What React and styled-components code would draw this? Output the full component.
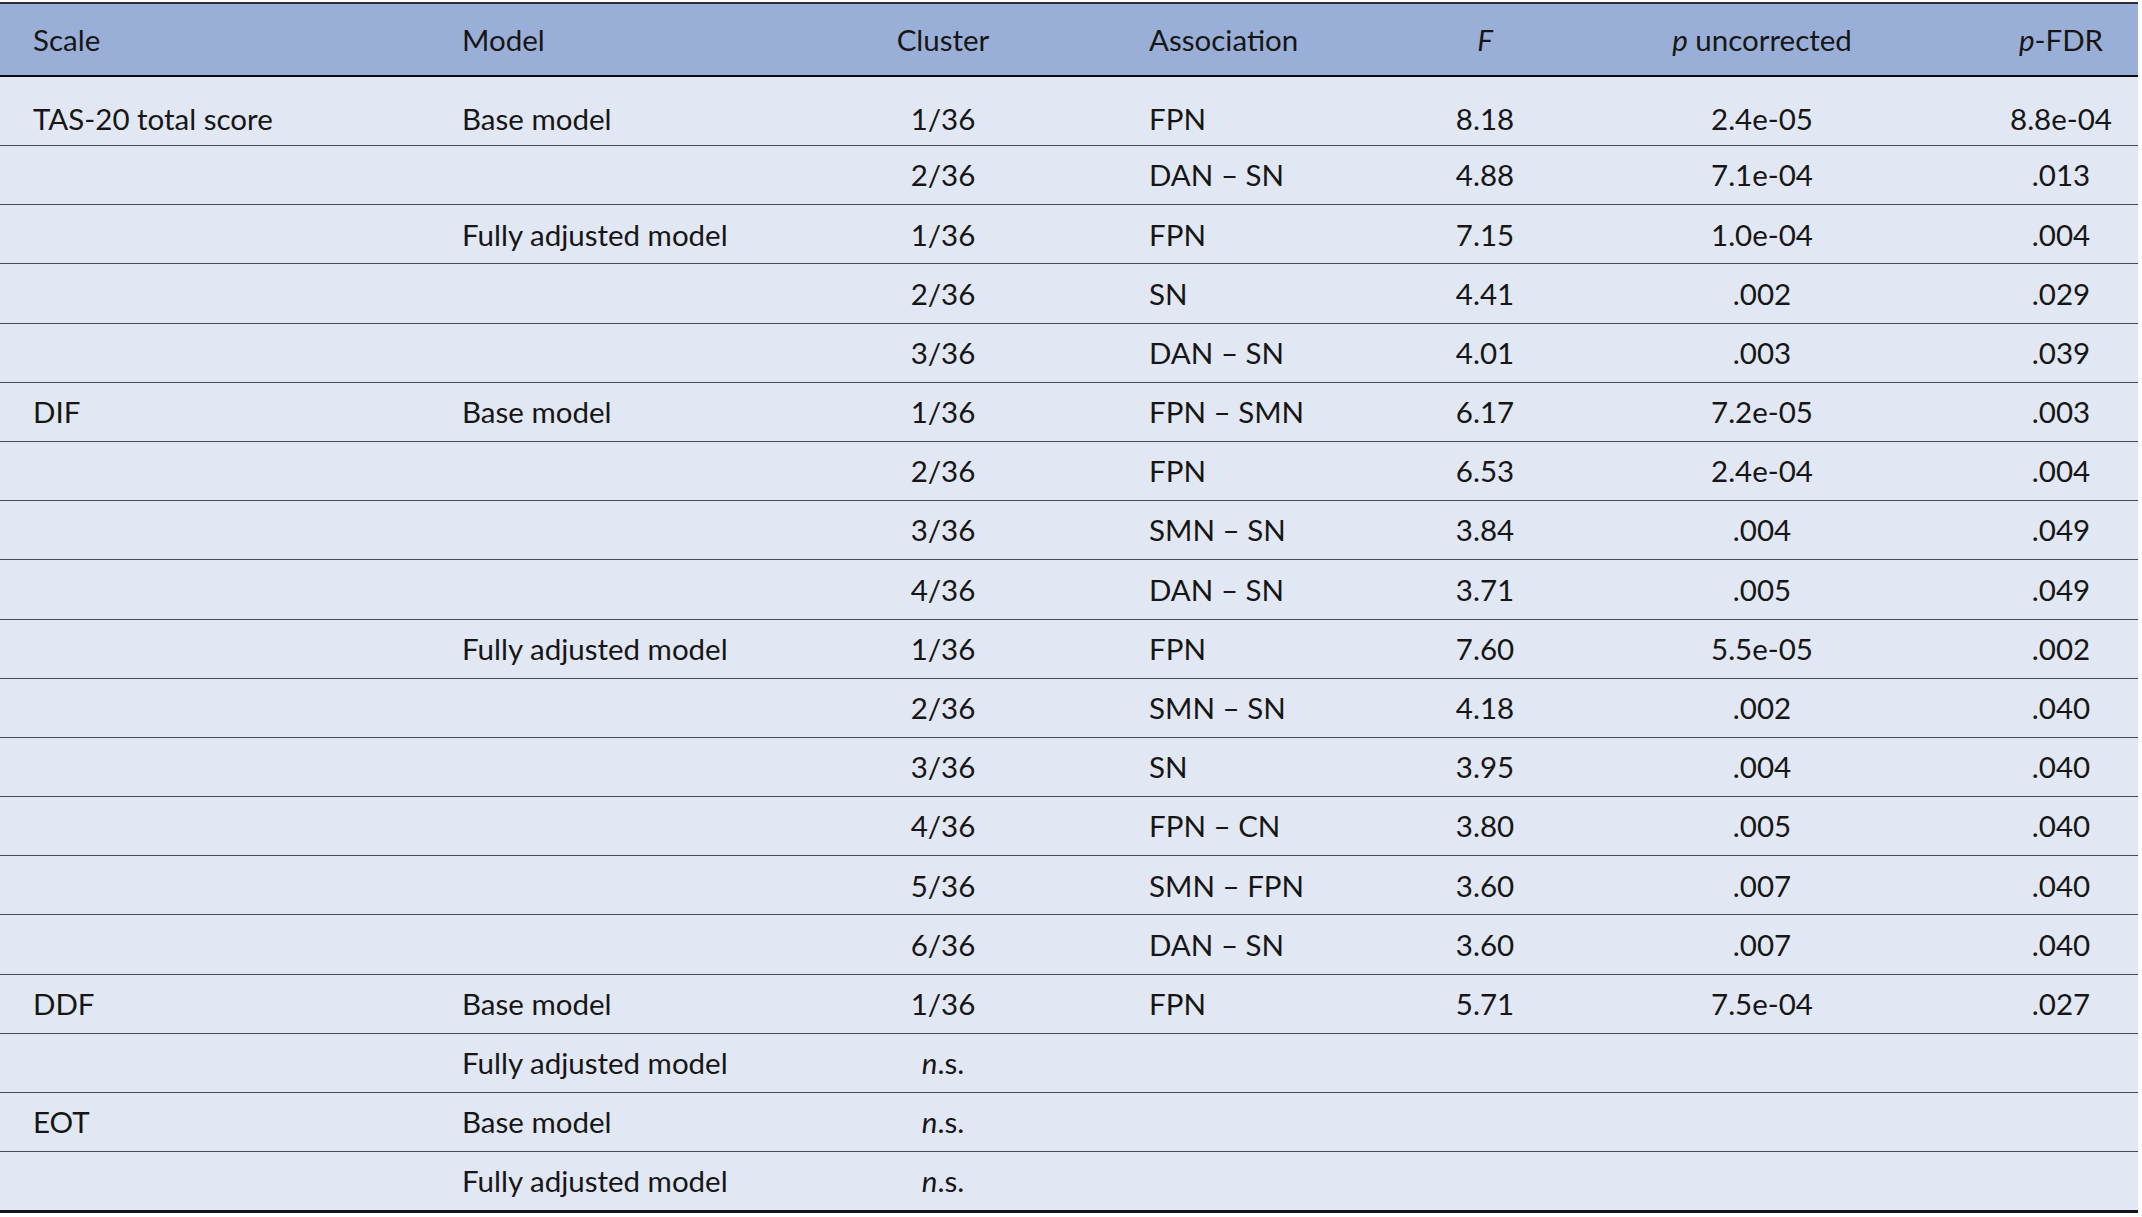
import React from 'react';
import styled, { createGlobalStyle } from 'styled-components';

const GlobalStyle = createGlobalStyle`
  html, body {
    margin: 0;
    padding: 0;
    background: #ffffff;
  }
  body {
    font-family: Lato, "Open Sans", "Noto Sans", sans-serif;
    color: #161616;
  }
`;

const COLS = '429px 407px 214px 330px 210px 344px 204px';

const Table = styled.div`
  width: 2138px;
  margin-top: 2px;
  border-top: 2px solid #2b2b30;
  background: #e1e7f3;
  font-size: 29.5px;
`;

const HeadRow = styled.div`
  display: grid;
  grid-template-columns: ${COLS};
  height: 71px;
  background: #9aafd7;
  border-bottom: 2px solid #0c0c10;
`;

const Row = styled.div`
  display: grid;
  grid-template-columns: ${COLS};
  box-sizing: border-box;
  height: ${p => (p.$first ? '69px' : p.$last ? '61px' : '59.2px')};
  padding-top: ${p => (p.$first ? '16px' : '0')};
  border-bottom: ${p => (p.$last ? '3px solid #15151a' : '1.6px solid #4a4a55')};
`;

const Cell = styled.div`
  display: flex;
  align-items: center;
  justify-content: ${p => (p.$align === 'center' ? 'center' : 'flex-start')};
  padding-left: ${p => p.$pad || 0}px;
  white-space: nowrap;
  line-height: 1;
`;

const Ital = styled.i`
  font-style: italic;
`;

const colPad = [33, 33, 0, 99, 0, 0, 50];
const colAlign = ['left', 'left', 'center', 'left', 'center', 'center', 'center'];

const header = [
  'Scale',
  'Model',
  'Cluster',
  'Association',
  <Ital>F</Ital>,
  <><Ital>p</Ital>{' uncorrected'}</>,
  <><Ital>p</Ital>-FDR</>,
];

const ns = <><Ital>n</Ital>.s.</>;

const rows = [
  ['TAS-20 total score', 'Base model', '1/36', 'FPN', '8.18', '2.4e-05', '8.8e-04'],
  ['', '', '2/36', 'DAN – SN', '4.88', '7.1e-04', '.013'],
  ['', 'Fully adjusted model', '1/36', 'FPN', '7.15', '1.0e-04', '.004'],
  ['', '', '2/36', 'SN', '4.41', '.002', '.029'],
  ['', '', '3/36', 'DAN – SN', '4.01', '.003', '.039'],
  ['DIF', 'Base model', '1/36', 'FPN – SMN', '6.17', '7.2e-05', '.003'],
  ['', '', '2/36', 'FPN', '6.53', '2.4e-04', '.004'],
  ['', '', '3/36', 'SMN – SN', '3.84', '.004', '.049'],
  ['', '', '4/36', 'DAN – SN', '3.71', '.005', '.049'],
  ['', 'Fully adjusted model', '1/36', 'FPN', '7.60', '5.5e-05', '.002'],
  ['', '', '2/36', 'SMN – SN', '4.18', '.002', '.040'],
  ['', '', '3/36', 'SN', '3.95', '.004', '.040'],
  ['', '', '4/36', 'FPN – CN', '3.80', '.005', '.040'],
  ['', '', '5/36', 'SMN – FPN', '3.60', '.007', '.040'],
  ['', '', '6/36', 'DAN – SN', '3.60', '.007', '.040'],
  ['DDF', 'Base model', '1/36', 'FPN', '5.71', '7.5e-04', '.027'],
  ['', 'Fully adjusted model', ns, '', '', '', ''],
  ['EOT', 'Base model', ns, '', '', '', ''],
  ['', 'Fully adjusted model', ns, '', '', '', ''],
];

export default function App() {
  return (
    <>
      <GlobalStyle />
      <Table>
        <HeadRow>
          {header.map((h, i) => (
            <Cell key={i} $pad={colPad[i]} $align={colAlign[i]}><span>{h}</span></Cell>
          ))}
        </HeadRow>
        {rows.map((r, ri) => (
          <Row key={ri} $first={ri === 0} $last={ri === rows.length - 1}>
            {r.map((c, i) => (
              <Cell key={i} $pad={colPad[i]} $align={colAlign[i]}><span>{c}</span></Cell>
            ))}
          </Row>
        ))}
      </Table>
    </>
  );
}
